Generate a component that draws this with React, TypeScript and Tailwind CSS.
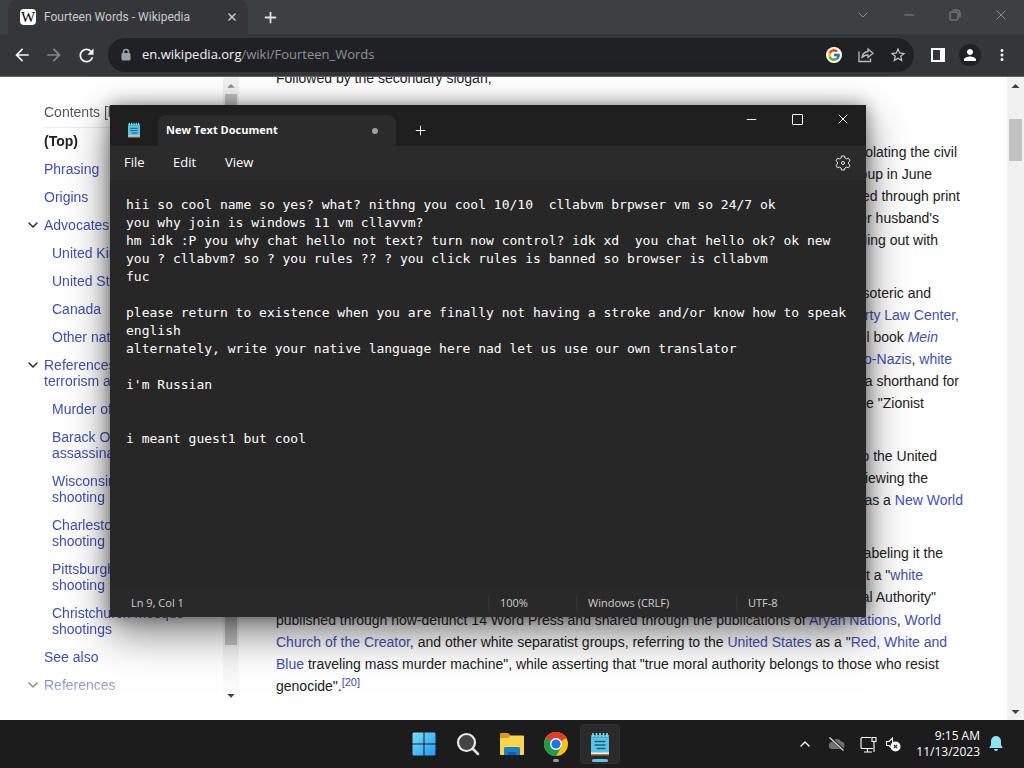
import type { ReactNode } from "react";
import { ChevronDown, ChevronUp, Minus, Plus, X } from "lucide-react";
import { FcGoogle } from "react-icons/fc";
import {
  MdArrowBack,
  MdArrowForward,
  MdMoreVert,
  MdPerson,
  MdRefresh,
  MdStarBorder,
} from "react-icons/md";

const contents = [
  { lines: ["Phrasing"] },
  { lines: ["Origins"] },
  { lines: ["Advocates"], open: true },
  { lines: ["United Kingdom"], sub: true },
  { lines: ["United States"], sub: true },
  { lines: ["Canada"], sub: true },
  { lines: ["Other nations"], sub: true },
  { lines: ["References", "terrorism a"], open: true },
  { lines: ["Murder of"], sub: true },
  { lines: ["Barack O", "assassina"], sub: true },
  { lines: ["Wisconsin", "shooting"], sub: true },
  { lines: ["Charleston", "shooting"], sub: true },
  { lines: ["Pittsburgh", "shooting"], sub: true },
  { lines: ["Christchurch mosque", "shootings"], sub: true },
  { lines: ["See also"] },
  { lines: ["References"], open: true },
];

const note = `hii so cool name so yes? what? nithng you cool 10/10  cllabvm brpwser vm so 24/7 ok
you why join is windows 11 vm cllavvm?
hm idk :P you why chat hello not text? turn now control? idk xd  you chat hello ok? ok new
you ? cllabvm? so ? you rules ?? ? you click rules is banned so browser is cllabvm
fuc

please return to existence when you are finally not having a stroke and/or know how to speak
english
alternately, write your native language here nad let us use our own translator

i'm Russian


i meant guest1 but cool`;

const WikiLink = ({ children }: { children: ReactNode }) => (
  <a href="#" className="text-[#3f51b0]">
    {children}
  </a>
);

const IconButton = ({ label, children }: { label: string; children: ReactNode }) => (
  <button
    aria-label={label}
    className="flex h-7 w-7 shrink-0 items-center justify-center rounded-full"
  >
    {children}
  </button>
);

const NotepadIcon = ({ className }: { className: string }) => (
  <svg viewBox="0 0 24 24" className={className}>
    <path d="M3 3h18v19H3z" fill="#5bc4e4" />
    <path d="M3 3h18v3H3z" fill="#3fa9cd" />
    <path
      d="M5 1v4M8.500 1v4M12 1v4M15.500 1v4M19 1v4"
      stroke="#8be0f4"
      strokeWidth="1.600"
    />
    <path d="M6.500 9.500h11M6.500 13h11M8.500 16.500h9" stroke="#14637f" strokeWidth="1.500" />
    <path d="M3 20.500h18V22H3z" fill="#f3f3f3" />
    <path d="M3 22h18v1.500H3z" fill="#c9683a" />
  </svg>
);

const BrowserBar = () => (
  <header className="shrink-0 font-['Open_Sans','Noto_Sans',sans-serif]">
    <div className="flex h-[34px] bg-[#3c4043] pl-2">
      <div className="flex w-60 items-center rounded-t-lg bg-[#35363a] pr-2 pl-3">
        <span className="flex h-4 w-4 items-center justify-center overflow-hidden rounded-sm bg-white font-['Liberation_Serif',serif] text-[15px] leading-4 text-black">
          W
        </span>
        <span className="ml-2 flex-1 font-['Roboto','Open_Sans',sans-serif] text-xs whitespace-nowrap text-[#c9cbce]">
          Fourteen Words - Wikipedia
        </span>
        <button aria-label="Close tab" className="flex w-4 justify-center">
          <X size={12} strokeWidth={3} className="text-[#c9cbce]" />
        </button>
      </div>
      <button aria-label="New tab" className="flex w-11 items-center justify-center">
        <Plus size={17} strokeWidth={2.500} className="text-[#dfe1e5]" />
      </button>
      <div className="ml-auto flex text-[#8b8e91]">
        <button aria-label="Search tabs" className="flex w-[46px] items-center justify-center pb-1">
          <ChevronDown size={16} strokeWidth={1.500} />
        </button>
        <button aria-label="Minimize" className="flex w-[46px] items-center justify-center pb-1">
          <Minus size={14} strokeWidth={1.500} />
        </button>
        <button aria-label="Restore" className="flex w-[46px] items-center justify-center pb-1">
          <svg viewBox="0 0 12 12" className="h-3 w-3" fill="none" stroke="currentColor">
            <rect x="1" y="3" width="8" height="8" rx="1" />
            <path d="M3.500 1h5a2.500 2.500 0 0 1 2.500 2.500v5" />
          </svg>
        </button>
        <button aria-label="Close" className="flex w-[46px] items-center justify-center pb-1">
          <X size={16} strokeWidth={1.500} />
        </button>
      </div>
    </div>
    <div className="flex h-[43px] items-center gap-1 border-b border-[#626366] bg-[#35363a] px-2 text-[#f1f3f4]">
      <IconButton label="Back">
        <MdArrowBack size={20} />
      </IconButton>
      <IconButton label="Forward">
        <MdArrowForward size={20} className="text-[#85878a]" />
      </IconButton>
      <IconButton label="Reload">
        <MdRefresh size={21} />
      </IconButton>
      <div className="mr-1.5 ml-1 flex h-[34px] flex-1 items-center gap-1 rounded-full bg-[#202124] pr-0.5 pl-3">
        <svg viewBox="0 0 12 14" className="h-3.5 w-3" fill="none" stroke="#9aa0a6">
          <path d="M3.500 6V4a2.500 2.500 0 0 1 5 0v2" strokeWidth="1.500" />
          <rect x="2" y="5.500" width="8" height="6.500" rx="0.500" fill="#9aa0a6" />
        </svg>
        <div className="ml-1.5 flex-1 text-[13px] whitespace-nowrap text-[#8f9398]">
          <span className="text-[#f1f3f4]">en.wikipedia.org</span>/wiki/Fourteen_Words
        </div>
        <IconButton label="Search with Google">
          <span className="rounded-full bg-white p-px">
            <FcGoogle size={14} />
          </span>
        </IconButton>
        <IconButton label="Share this page">
          <svg
            viewBox="0 0 16 16"
            className="h-4 w-4"
            fill="none"
            stroke="#b9bcc0"
            strokeWidth="1.300"
          >
            <path d="M1 4.500V14.500H12.500V11.500" />
            <path d="M10 2l5 4.200-5 4.200V8C7 8 5 9 3.800 11.300 4 7.500 6 5 10 4.500z" />
          </svg>
        </IconButton>
        <IconButton label="Bookmark this tab">
          <MdStarBorder size={18} className="text-[#c4c7cb]" />
        </IconButton>
      </div>
      <IconButton label="Side panel">
        <svg viewBox="0 0 14 14" className="h-3.5 w-3.5">
          <path d="M0 0h14v14H0z" fill="#fff" />
          <path d="M2 2h7v10H2z" fill="#35363a" />
        </svg>
      </IconButton>
      <IconButton label="Profile">
        <span className="flex h-[22px] w-[22px] items-center justify-center rounded-full bg-[#202124]">
          <MdPerson size={18} className="text-white" />
        </span>
      </IconButton>
      <IconButton label="Menu">
        <MdMoreVert size={18} />
      </IconButton>
    </div>
  </header>
);

const ScrollArrow = ({ down = false, color }: { down?: boolean; color: string }) => (
  <svg viewBox="0 0 17 17" className="h-[17px] w-full shrink-0" fill={color}>
    <path d={down ? "M4.500 7h8l-4 4z" : "M4.500 11h8l-4-4z"} />
  </svg>
);

const Sidebar = () => (
  <nav aria-label="Contents" className="flex w-[239px] shrink-0 overflow-hidden">
    <div className="w-[223px] shrink-0 pt-[27px] pl-6 text-sm leading-4 whitespace-nowrap [mask-image:linear-gradient(to_bottom,black_590px,transparent_632px)]">
      <div className="ml-5 border-b border-[#eaecf0] pb-[7px] text-[#54595d]">
        Contents <button>[hide]</button>
      </div>
      <div className="ml-5 pt-[5px] pb-1.5 font-bold text-[#202122]">
        <a href="#">(Top)</a>
      </div>
      {contents.map((item, index) => (
        <div key={index} className={item.sub ? "flex py-1.5 pl-2" : "flex py-1.5"}>
          <span className="w-5 shrink-0">
            {item.open && <ChevronDown size={16} className="ml-px text-[#202122]" />}
          </span>
          <a href="#" className="text-[#3f51b0]">
            {item.lines.map((line) => (
              <span key={line} className="block">
                {line}
              </span>
            ))}
          </a>
        </div>
      ))}
    </div>
    <div className="mb-4 flex w-4 shrink-0 flex-col bg-linear-to-b from-[#f1f1f1] from-90% to-white">
      <ScrollArrow color="#8a8a8a" />
      <div className="mx-0.5 h-[551px] bg-[#c1c1c1]" />
      <div className="flex-1" />
      <ScrollArrow down color="#404040" />
    </div>
  </nav>
);

const Article = () => (
  <article className="flex-1 overflow-hidden pl-[37px] text-sm leading-[22px] whitespace-nowrap text-[#202122]">
    <p className="-mt-2.5">Followed by the secondary slogan;</p>
    <div className="mt-[52px] text-right">
      <p className="w-[681px]">violating the civil</p>
      <p className="w-[656px]">group in June</p>
      <p className="w-[684px]">distributed through print</p>
      <p className="w-[663px]">her husband's</p>
      <p className="w-[662px]">falling out with</p>
    </div>
    <div className="mt-[31px] text-right">
      <p className="w-[655px]">esoteric and</p>
      <p className="w-[683px]">
        <WikiLink>Poverty Law Center,</WikiLink>
      </p>
      <p className="w-[662px]">
        l book{" "}
        <WikiLink>
          <i>Mein</i>
        </WikiLink>
      </p>
      <p className="w-[676px]">
        <WikiLink>neo-Nazis</WikiLink>, <WikiLink>white</WikiLink>
      </p>
      <p className="w-[683px]">as a shorthand for</p>
      <p className="w-[648px]">the "Zionist</p>
    </div>
    <div className="mt-[31px] text-right">
      <p className="w-[661px]">to the United</p>
      <p className="w-[652px]">viewing the</p>
      <p className="w-[687px]">
        as a <WikiLink>New World</WikiLink>
      </p>
    </div>
    <div className="mt-[31px] text-right">
      <p className="w-[667px]">labeling it the</p>
      <p className="w-[647px]">
        that a "<WikiLink>white</WikiLink>
      </p>
      <p className="w-[660px]">Moral Authority"</p>
    </div>
    <p className="mt-px">
      published through now-defunct 14 Word Press and shared through the publications of{" "}
      <WikiLink>Aryan Nations</WikiLink>, <WikiLink>World</WikiLink>
      <br />
      <WikiLink>Church of the Creator</WikiLink>, and other white separatist groups, referring
      to the <WikiLink>United States</WikiLink> as a "<WikiLink>Red, White and</WikiLink>
      <br />
      <WikiLink>Blue</WikiLink> traveling mass murder machine", while asserting that "true moral
      authority belongs to those who resist
      <br />
      genocide".
      <sup className="text-[11px]">
        <WikiLink>[20]</WikiLink>
      </sup>
    </p>
  </article>
);

const Notepad = () => (
  <section
    aria-label="Notepad"
    className="absolute top-[105px] left-[110px] flex h-[512px] w-[756px] flex-col bg-[#272727] font-['Open_Sans','Noto_Sans',sans-serif] text-white shadow-[0_16px_40px_rgba(0,0,0,0.5),0_0_16px_rgba(0,0,0,0.4)]"
  >
    <div className="flex h-[41px] bg-[#1f1f1f]">
      <div className="flex w-12 items-center justify-center pt-2">
        <NotepadIcon className="h-4 w-4" />
      </div>
      <div className="mt-2.5 flex w-[238px] items-center justify-between rounded-t-lg bg-[#2b2b2b] pr-[18px] pl-2 text-[11px] font-bold">
        New Text Document
        <span className="h-1.5 w-1.5 rounded-full bg-[#a0a0a0]" />
      </div>
      <button aria-label="New tab" className="flex w-[49px] items-center justify-center pt-2.5">
        <Plus size={15} strokeWidth={1.500} />
      </button>
      <div className="ml-auto flex h-7">
        <button aria-label="Minimize" className="flex w-[46px] items-center justify-center">
          <Minus size={15} strokeWidth={1.500} />
        </button>
        <button aria-label="Maximize" className="flex w-[46px] items-center justify-center">
          <span className="h-[11px] w-[11px] rounded-[1px] border border-white" />
        </button>
        <button aria-label="Close" className="flex w-[46px] items-center justify-center">
          <X size={16} strokeWidth={1.500} />
        </button>
      </div>
    </div>
    <div className="flex h-[34px] items-center bg-[#2b2b2b] pr-[15px] pl-3.5 text-[13px]">
      <button className="w-[49px] text-left">File</button>
      <button className="w-[52px] text-left">Edit</button>
      <button>View</button>
      <button aria-label="Settings" className="ml-auto">
        <svg viewBox="0 0 16 16" className="h-4 w-4" fill="none" stroke="#e6e6e6">
          <path
            d="M6.500 1h3l.4 2 1.600.9 2-.7 1.500 2.600-1.500 1.300v1.800l1.500 1.300-1.500 2.600-2-.7-1.600.9-.4 2h-3l-.4-2-1.600-.9-2 .7L1 10.200l1.500-1.300V7.100L1 5.800l1.500-2.600 2 .7L6.100 3z"
            strokeLinejoin="round"
          />
          <circle cx="8" cy="8" r="1.500" />
        </svg>
      </button>
    </div>
    <textarea
      aria-label="Text editor"
      spellCheck={false}
      wrap="off"
      defaultValue={note}
      className="block flex-1 resize-none overflow-hidden bg-[#272727] pt-4 pl-4 font-['DejaVu_Sans_Mono',monospace] text-[13px] leading-[18px] whitespace-pre outline-none"
    />
    <footer className="flex h-7 items-center bg-[#292929] pl-[21px] text-[11px] font-medium text-[#d0d0d0]">
      <span className="flex-1">Ln 9, Col 1</span>
      <span className="w-[88px] border-l border-[#363636] pl-[11px]">100%</span>
      <span className="w-40 border-l border-[#363636] pl-[11px]">Windows (CRLF)</span>
      <span className="w-[130px] border-l border-[#363636] pl-[11px]">UTF-8</span>
    </footer>
  </section>
);

const TaskButton = ({
  label,
  active = false,
  running = false,
  children,
}: {
  label: string;
  active?: boolean;
  running?: boolean;
  children: ReactNode;
}) => (
  <button
    aria-label={label}
    className={
      active
        ? "relative flex h-10 w-10 items-center justify-center rounded border border-[#303030] bg-[#2a2a2a]"
        : "relative flex h-10 w-10 items-center justify-center rounded"
    }
  >
    {children}
    {running && <span className="absolute bottom-0.5 h-[3px] w-1.5 rounded-full bg-[#9a9a9a]" />}
    {active && <span className="absolute bottom-px h-[3px] w-4 rounded-full bg-[#5fc3ea]" />}
  </button>
);

const Taskbar = () => (
  <footer className="grid h-12 shrink-0 grid-cols-[1fr_auto_1fr] items-center bg-[#1c1c1c] font-['Open_Sans','Noto_Sans',sans-serif] text-white">
    <div />
    <div className="flex gap-1">
      <TaskButton label="Start">
        <svg viewBox="0 0 24 24" className="h-6 w-6">
          <defs>
            <linearGradient id="start" x1="0" y1="0" x2="1" y2="1" gradientUnits="objectBoundingBox">
              <stop offset="0" stopColor="#7fdcfb" />
              <stop offset="1" stopColor="#1d9bf0" />
            </linearGradient>
          </defs>
          <path
            d="M1.500.5H11.500V11.500H.5V1.500zM12.500.5H22.500l1 1V11.500H12.500zM.5 12.500H11.500V23.500H1.500l-1-1zM12.500 12.500H23.500V22.500l-1 1H12.500z"
            fill="url(#start)"
          />
        </svg>
      </TaskButton>
      <TaskButton label="Search">
        <svg viewBox="0 0 24 24" className="h-6 w-6">
          <path d="M16.500 16.500l5.500 5.500" stroke="#dedede" strokeWidth="2.600" strokeLinecap="round" />
          <circle cx="10.500" cy="10.500" r="8.500" fill="#434343" stroke="#e8e8e8" strokeWidth="2.200" />
        </svg>
      </TaskButton>
      <TaskButton label="File Explorer">
        <svg viewBox="0 0 24 24" className="h-6 w-6">
          <path d="M0 2a1 1 0 0 1 1-1h7l3 2.500L9 7H0z" fill="#d69b17" />
          <path d="M0 6h8l3-2.500h12a1 1 0 0 1 1 1V22a1 1 0 0 1-1 1H1a1 1 0 0 1-1-1z" fill="#fbd54c" />
          <path d="M4 23v-6.500A1.500 1.500 0 0 1 5.500 15h13a1.500 1.500 0 0 1 1.500 1.500V23z" fill="#1b7cd0" />
          <path d="M8 23v-3h8v3z" fill="#0f5da6" />
        </svg>
      </TaskButton>
      <TaskButton label="Google Chrome" running>
        <svg viewBox="0 0 24 24" className="h-6 w-6">
          <circle cx="12" cy="12" r="12" fill="#fbc116" />
          <path d="M12 12L1.600 6A12 12 0 0 1 22.400 6z" fill="#e33b2e" />
          <path d="M12 6h10.400A12 12 0 0 0 12 0z" fill="#e33b2e" />
          <path d="M1.600 6A12 12 0 0 0 12 24l5.200-9L12 12z" fill="#229a49" />
          <path d="M12 24l5.200-9-5.200-3-3 5z" fill="#229a49" />
          <circle cx="12" cy="12" r="6" fill="#fff" />
          <circle cx="12" cy="12" r="4.600" fill="#1a73e8" />
        </svg>
      </TaskButton>
      <TaskButton label="Notepad" active>
        <NotepadIcon className="h-6 w-6" />
      </TaskButton>
    </div>
    <div className="flex items-center justify-end pr-5">
      <button aria-label="Show hidden icons" className="mr-[15px]">
        <ChevronUp size={16} />
      </button>
      <svg viewBox="0 0 18 16" className="mr-3.5 h-4 w-[18px]">
        <path
          d="M4.500 13a3.500 3.500 0 0 1-.4-7A5 5 0 0 1 13 5.500a3.800 3.800 0 0 1 .5 7.500z"
          fill="#727272"
        />
        <path d="M2 1.500l14 13" stroke="#1c1c1c" strokeWidth="3" />
        <path d="M1.500 1.500l14 13" stroke="#e0e0e0" strokeWidth="1.200" />
      </svg>
      <svg viewBox="0 0 17 17" className="mr-2 h-[17px] w-[17px]" fill="none" stroke="#fff" strokeWidth="1.100">
        <path d="M11 1.500H2A1 1 0 0 0 1 2.500V11.500A1 1 0 0 0 2 12.500H13M7.500 12.500V16M4 16H12" />
        <path d="M12 1.500h4v4h-4zM14 5.500V16" />
      </svg>
      <svg viewBox="0 0 16 16" className="mr-[15px] h-4 w-4" fill="none" stroke="#fff" strokeWidth="1.100">
        <path d="M6 11.500L4 9.500H1.500v-4H4L7.500 2v5" />
        <circle cx="10.500" cy="10.500" r="4.500" fill="#fff" />
        <path d="M8.800 8.800l3.400 3.400M12.200 8.800l-3.400 3.400" stroke="#1c1c1c" />
      </svg>
      <div className="text-right text-xs leading-4">
        <div>9:15 AM</div>
        <div>11/13/2023</div>
      </div>
      <svg viewBox="0 0 16 16" className="ml-2 h-4 w-4 shrink-0" fill="#8fe3f5">
        <path d="M8 0a5 5 0 0 1 5 5v4l1.800 3H1.200L3 9V5a5 5 0 0 1 5-5zM6 13h4a2 2 0 0 1-4 0z" />
      </svg>
    </div>
  </footer>
);

const App = () => (
  <div className="relative flex h-screen flex-col overflow-hidden bg-white font-['Liberation_Sans',Arial,sans-serif]">
    <BrowserBar />
    <main className="flex min-h-0 flex-1">
      <Sidebar />
      <Article />
      <div className="flex w-[17px] shrink-0 flex-col bg-[#f1f1f1]">
        <ScrollArrow color="#404040" />
        <div className="mx-0.5 mt-[25px] h-[42px] bg-[#c1c1c1]" />
        <div className="flex-1" />
        <ScrollArrow down color="#404040" />
      </div>
    </main>
    <Taskbar />
    <Notepad />
  </div>
);

export default App;
